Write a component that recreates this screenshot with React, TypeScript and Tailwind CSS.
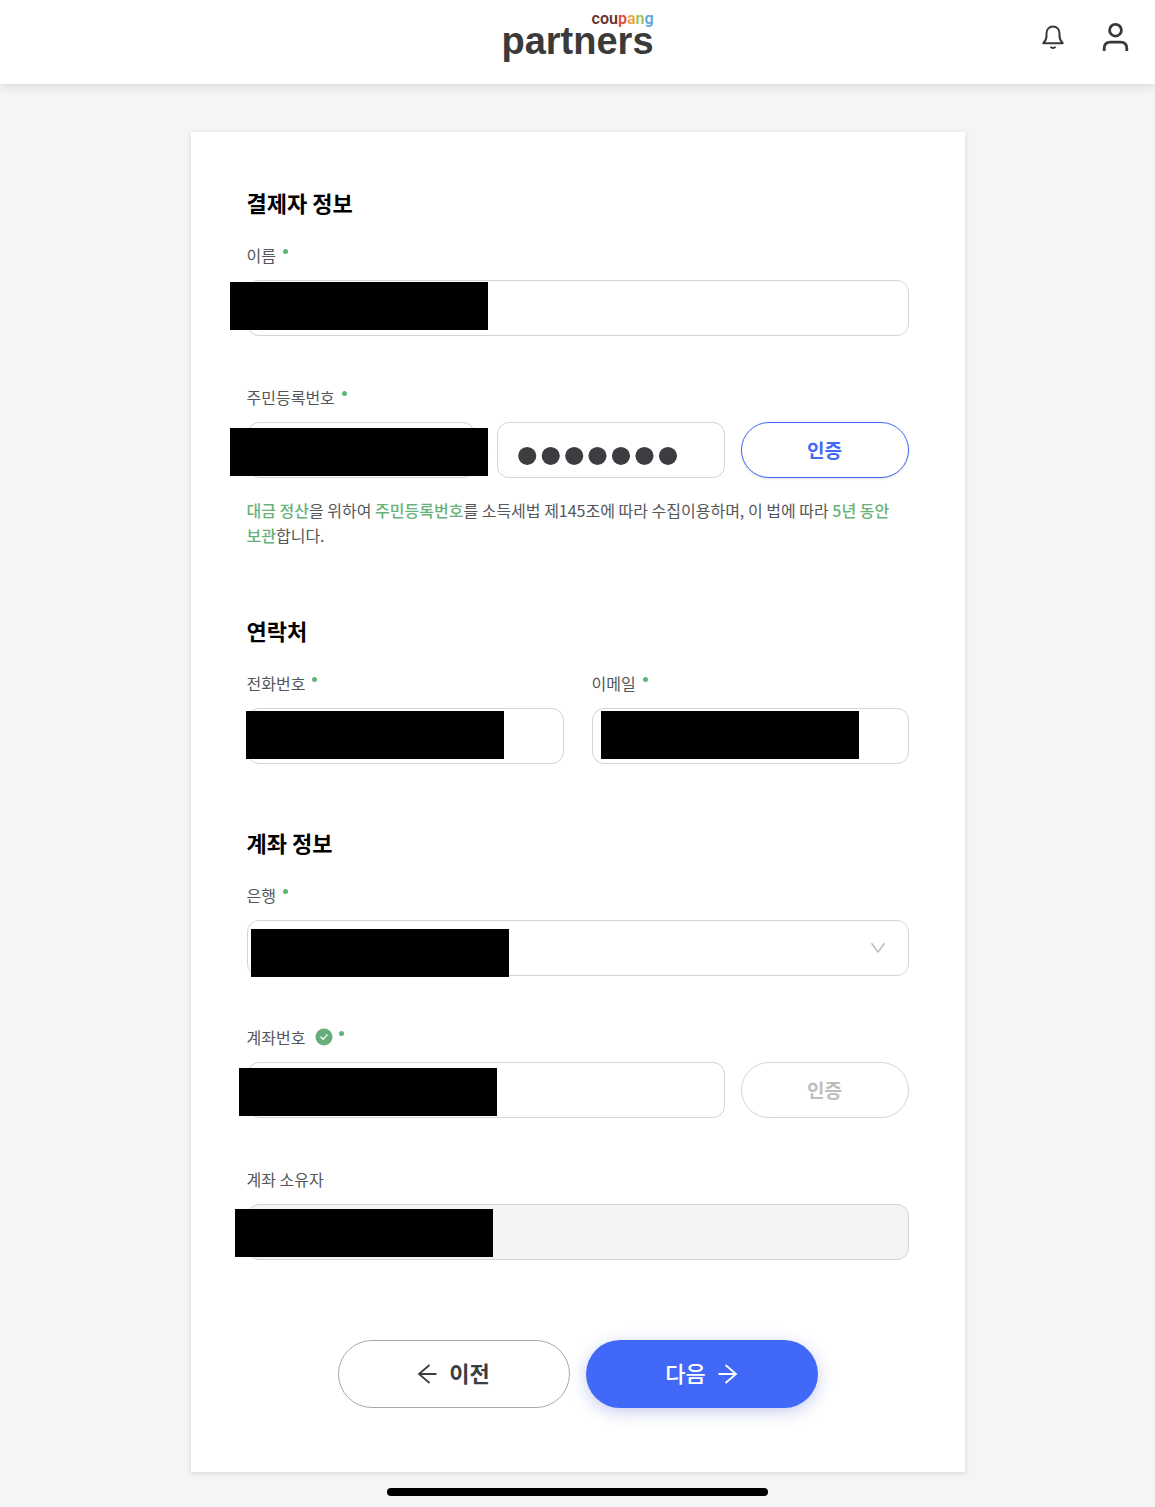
import { useState } from "react";
import type { ReactNode } from "react";
import clsx from "clsx";

const inputClass =
  "block h-14 w-full rounded-xl border border-[#d4d4d4] px-[18px] text-[#3c3d40] outline-none focus:border-[#4168f6]";

interface LabelProps {
  htmlFor: string;
  children: ReactNode;
  required?: boolean;
  verified?: boolean;
}

function Label({ htmlFor, children, required = true, verified = false }: LabelProps) {
  return (
    <label
      htmlFor={htmlFor}
      className="mb-[13px] flex h-6 items-center text-base leading-6 text-[#54565a]"
    >
      {children}
      {verified && (
        <svg className="ml-2.5 h-[18px] w-[18px]" viewBox="0 0 18 18" fill="none">
          <circle cx="9" cy="9" r="8.5" fill="#67ae7b" />
          <path
            d="M6 9l2.2 2.3L12 6.8"
            stroke="white"
            strokeWidth="1.3"
            strokeLinecap="round"
            strokeLinejoin="round"
          />
        </svg>
      )}
      {required && (
        <span
          className={clsx(
            "mb-2 h-[5px] w-[5px] rounded-full bg-[#5fb478]",
            verified ? "ml-1.5" : "ml-[7px]"
          )}
        />
      )}
    </label>
  );
}

// Black bar that hides a private value, it is allowed to stick out of the field
function Redacted({ className }: { className: string }) {
  return (
    <span
      aria-hidden="true"
      className={clsx("pointer-events-none absolute h-12 w-[258px] bg-black", className)}
    />
  );
}

function VerifyButton({ disabled = false }: { disabled?: boolean }) {
  return (
    <button
      type="button"
      disabled={disabled}
      className={clsx(
        "h-14 w-[168px] shrink-0 rounded-full border bg-white text-[19px] font-bold",
        disabled ? "border-[#d4d4d4] text-[#bdbdbd]" : "border-[#4168f6] text-[#4168f6] shadow-sm"
      )}
    >
      인증
    </button>
  );
}

function Logo() {
  return (
    <a href="#" className="flex flex-col items-end">
      <span className="flex h-4 font-['Roboto',sans-serif] text-base leading-4 font-semibold text-[#6b322d]">
        cou<span className="text-[#dc4f42]">p</span>
        <span className="text-[#eba43a]">a</span>
        <span className="text-[#9cc653]">n</span>
        <span className="text-[#5ba6e2]">g</span>
      </span>
      <span className="font-['Liberation_Sans',sans-serif] text-[38px] leading-7 font-bold text-[#3a3a3a]">
        partners
      </span>
    </a>
  );
}

function Header() {
  return (
    <header className="relative grid h-[84px] grid-cols-[1fr_auto_1fr] items-start bg-white shadow-[0_2px_10px_rgba(0,0,0,0.12)]">
      <div />
      <div className="pt-[11px]">
        <Logo />
      </div>
      <div className="flex h-[74px] items-center justify-end gap-8 pr-6">
        <button type="button" aria-label="알림">
          <svg className="h-7 w-7" viewBox="0 0 28 28" fill="none" stroke="#37373c">
            <path
              d="M4.3 20.2h19.4c-2.2-2.2-3.2-4.3-3.2-7.2v-2.8C20.5 6.3 17.7 3.5 14 3.5s-6.5 2.8-6.5 6.7V13c0 2.9-1 5-3.2 7.2z"
              strokeWidth="2"
              strokeLinejoin="round"
            />
            <path d="M11.6 23.6c.5 1 1.3 1.5 2.4 1.5s1.9-.5 2.4-1.5" strokeWidth="2" />
          </svg>
        </button>
        <button type="button" aria-label="내 계정">
          <svg className="h-8 w-8" viewBox="0 0 32 32" fill="none" stroke="#37373c" strokeWidth="2.8">
            <circle cx="16.5" cy="9.2" r="5.9" />
            <path d="M5.2 30v-2.5c0-4 2.3-6.3 6.3-6.3h10c4 0 6.3 2.3 6.3 6.3V30" />
          </svg>
        </button>
      </div>
    </header>
  );
}

function Section({ title, children }: { title: string; children: ReactNode }) {
  return (
    <section>
      <h2 className="mb-[25px] text-[22px] leading-8 font-bold text-black">{title}</h2>
      {children}
    </section>
  );
}

export default function App() {
  const [idBack, setIdBack] = useState("0000000");

  return (
    <div className="min-h-screen bg-[#f5f5f5] font-['Noto_Sans_CJK_KR',sans-serif]">
      <Header />

      <main className="mx-auto mt-12 max-w-[774px] bg-white px-14 pt-[54px] pb-16 shadow-[0_1px_5px_rgba(0,0,0,0.14)]">
        <form className="flex flex-col gap-[62px]" onSubmit={(e) => e.preventDefault()}>
          <Section title="결제자 정보">
            <div className="flex flex-col gap-[49px]">
              <div>
                <Label htmlFor="name">이름</Label>
                <div className="relative">
                  <input id="name" type="text" className={inputClass} />
                  <Redacted className="top-0.5 -left-[17px]" />
                </div>
              </div>

              <div>
                <Label htmlFor="id-front">주민등록번호</Label>
                <div className="flex items-center gap-4">
                  <div className="relative flex flex-1 items-center">
                    <input id="id-front" type="text" className={clsx(inputClass, "min-w-0 flex-1")} />
                    <span className="w-[22px] text-center text-base">-</span>
                    <input
                      type="password"
                      aria-label="주민등록번호 뒷자리"
                      value={idBack}
                      maxLength={7}
                      onChange={(e) => setIdBack(e.target.value)}
                      className={clsx(
                        inputClass,
                        "min-w-0 flex-1 pt-2 font-['Liberation_Sans',sans-serif] text-[67px] leading-none"
                      )}
                    />
                    <Redacted className="top-1.5 -left-[17px]" />
                  </div>
                  <VerifyButton />
                </div>
                <p className="mt-5 pb-1 text-base leading-[25px] break-keep text-[#54565a]">
                  <span className="font-medium text-[#67b27c]">대금 정산</span>을 위하여{" "}
                  <span className="font-medium text-[#67b27c]">주민등록번호</span>를 소득세법 제145조에
                  따라 수집이용하며, 이 법에 따라{" "}
                  <span className="font-medium text-[#67b27c]">5년 동안 보관</span>
                  합니다.
                </p>
              </div>
            </div>
          </Section>

          <Section title="연락처">
            <div className="grid grid-cols-2 gap-7">
              <div>
                <Label htmlFor="phone">전화번호</Label>
                <div className="relative">
                  <input id="phone" type="tel" className={inputClass} />
                  <Redacted className="top-[3px] -left-px" />
                </div>
              </div>
              <div>
                <Label htmlFor="email">이메일</Label>
                <div className="relative">
                  <input id="email" type="email" className={inputClass} />
                  <Redacted className="top-[3px] left-[9px]" />
                </div>
              </div>
            </div>
          </Section>

          <Section title="계좌 정보">
            <div className="flex flex-col gap-[49px]">
              <div>
                <Label htmlFor="bank">은행</Label>
                <div className="relative">
                  <select id="bank" className={clsx(inputClass, "appearance-none")} />
                  <svg
                    className="pointer-events-none absolute top-5 right-[23px] h-4 w-4"
                    viewBox="0 0 16 16"
                    fill="none"
                    stroke="#bdbdbd"
                    strokeWidth="1.5"
                  >
                    <path d="M1.5 3.3L8 12l6.5-8.7" />
                  </svg>
                  <Redacted className="top-[9px] left-1" />
                </div>
              </div>

              <div>
                <Label htmlFor="account" verified>
                  계좌번호
                </Label>
                <div className="flex gap-4">
                  <div className="relative flex-1">
                    <input id="account" type="text" className={inputClass} />
                    <Redacted className="top-1.5 -left-2" />
                  </div>
                  <VerifyButton disabled />
                </div>
              </div>

              <div>
                <Label htmlFor="owner" required={false}>
                  계좌 소유자
                </Label>
                <div className="relative">
                  <input id="owner" type="text" disabled className={clsx(inputClass, "bg-[#f3f3f3]")} />
                  <Redacted className="top-[5px] -left-3" />
                </div>
              </div>
            </div>
          </Section>

          <div className="mt-[18px] flex justify-center gap-4">
            <button
              type="button"
              className="flex h-[68px] w-[232px] items-center justify-center gap-3 rounded-full border border-[#a9a9ad] bg-white text-[22px] font-bold text-[#3c3d40]"
            >
              <svg className="h-5 w-5" viewBox="0 0 20 20" fill="none" stroke="currentColor" strokeWidth="1.8">
                <path d="M19.5 10H2M12.5 1L2 10l10.5 9" />
              </svg>
              <span className="pb-1">이전</span>
            </button>
            <button
              type="submit"
              className="flex h-[68px] w-[232px] items-center justify-center gap-3 rounded-full bg-[#4168f6] text-[22px] font-medium text-white shadow-[0_4px_16px_rgba(65,90,200,0.3)]"
            >
              <span className="pb-1">다음</span>
              <svg className="h-5 w-5" viewBox="0 0 20 20" fill="none" stroke="currentColor" strokeWidth="1.8">
                <path d="M.5 10H18M7.500 1L18 10 7.500 19" />
              </svg>
            </button>
          </div>
        </form>
      </main>

      <div className="mx-auto mt-4 h-2 w-[33%] rounded-full bg-black" />
    </div>
  );
}
